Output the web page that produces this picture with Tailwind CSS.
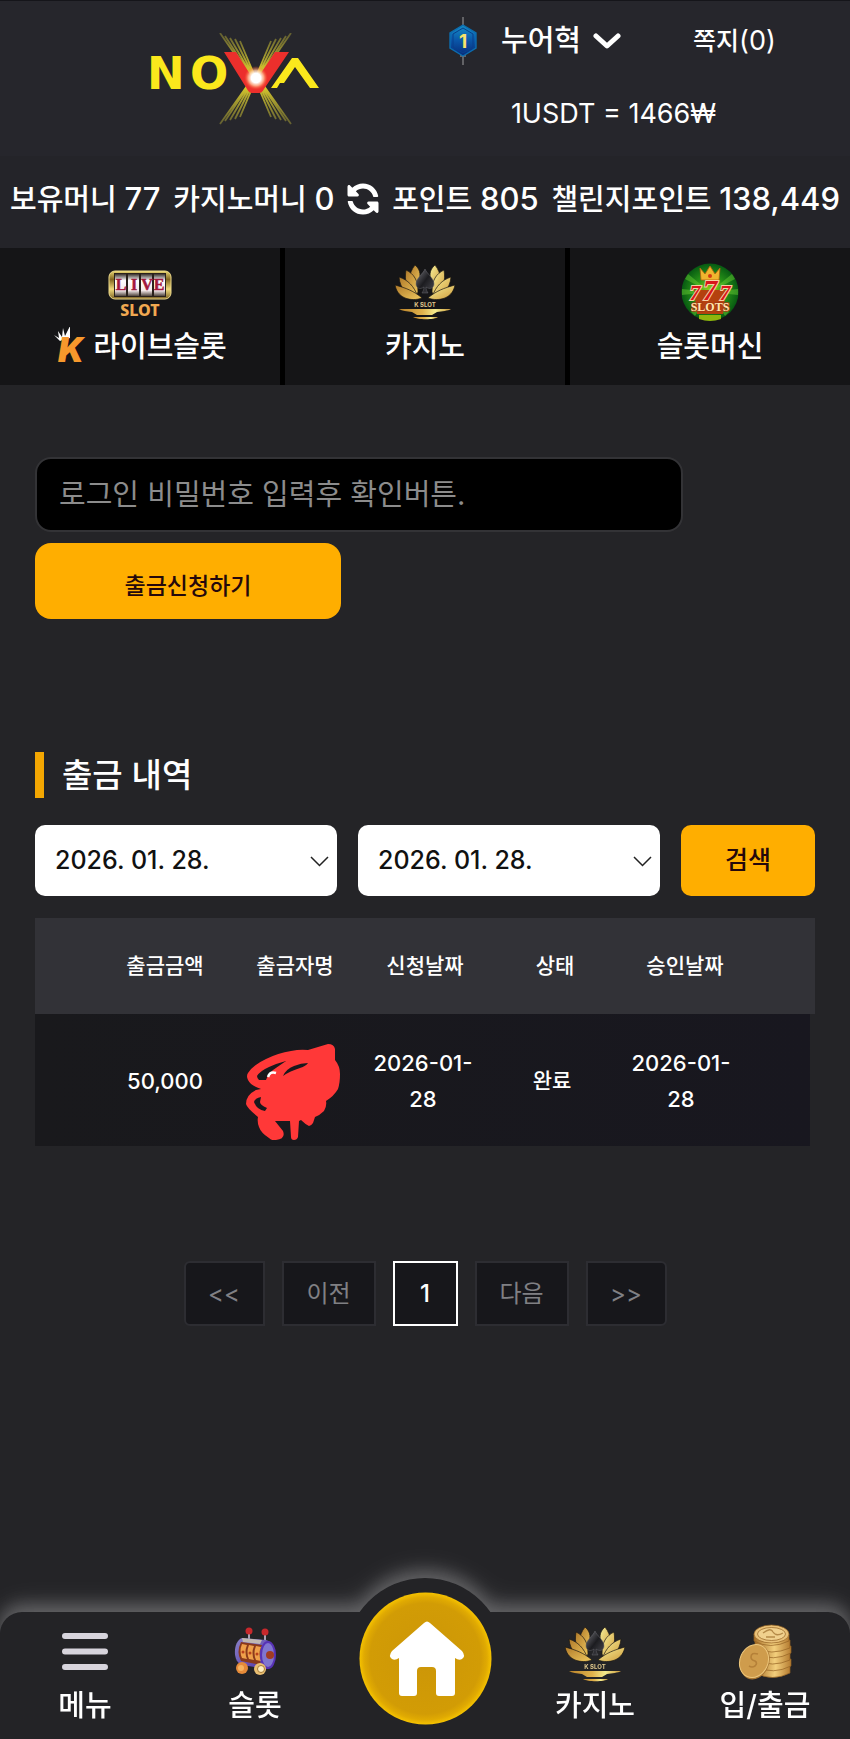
<!DOCTYPE html>
<html lang="ko">
<head>
<meta charset="utf-8">
<meta name="viewport" content="width=device-width, initial-scale=1">
<title>NOVA - 출금신청</title>
<script src="https://cdn.jsdelivr.net/npm/@tailwindcss/browser@4"></script>
</head>
<body class="flex min-h-screen flex-col bg-[#242427] font-['Inter','Noto_Sans_CJK_KR',sans-serif] text-[29px] leading-10 font-medium text-white">

<svg class="absolute size-0" aria-hidden="true">
  <defs>
    <linearGradient id="gold" x1="0" y1="0" x2="1" y2="0">
      <stop offset="0" stop-color="#b9822a"/><stop offset=".45" stop-color="#e0b24c"/><stop offset=".7" stop-color="#f3ea8c"/><stop offset="1" stop-color="#c9973a"/>
    </linearGradient>
    <linearGradient id="petalL" x1="0" y1="0" x2="1" y2="1"><stop offset="0" stop-color="#b07a2a"/><stop offset="1" stop-color="#f0c95e"/></linearGradient>
    <linearGradient id="petalR" x1="1" y1="1" x2="0" y2="0"><stop offset="0" stop-color="#d09b3a"/><stop offset="1" stop-color="#f6f09a"/></linearGradient>
    <linearGradient id="spade" x1="0" y1="0" x2="1" y2="1"><stop offset="0" stop-color="#77777d"/><stop offset=".5" stop-color="#1c1c20"/><stop offset="1" stop-color="#4a4a50"/></linearGradient>
    <symbol id="lotus" viewBox="0 0 60 56">
      <g fill="url(#petalL)" stroke="#1a1712" stroke-width=".7">
        <path d="M20 1c6 5 6 11 3 20l-3 6c-7-8-7-17 0-26z"/>
        <path d="M11 6c8 4 12 10 12 22l-2 4C12 26 9 17 11 6z"/>
        <path d="M4 13c9 3 15 9 19 20C13 33 5 25 4 13z"/>
        <path d="M0 21c11 3 19 6 27 13-7 3-24 3-27-13z"/>
      </g>
      <g fill="url(#petalR)" stroke="#1a1712" stroke-width=".7">
        <path d="M40 1c-6 5-6 11-3 20l3 6c7-8 7-17 0-26z"/>
        <path d="M49 6c-8 4-12 10-12 22l2 4c9-6 12-15 10-26z"/>
        <path d="M56 13c-9 3-15 9-19 20 10 0 18-8 19-20z"/>
        <path d="M60 21c-11 3-19 6-27 13 7 3 24 3 27-13z"/>
      </g>
      <path d="M30 5c2 5 9 9 9 15 0 4-4 6-8 3 0 3 1 4 2 6h-6c1-2 2-3 2-6-4 3-8 1-8-3 0-6 7-10 9-15z" fill="url(#spade)" stroke="#66666c" stroke-width=".5"/>
      <text x="30" y="43" text-anchor="middle" font-family="Inter" font-size="6" font-weight="700" fill="#e0c88c">K SLOT</text>
      <path d="M4 45h52c-3 2-9 2-14 3l-5 3H22l-5-3c-5-1-10-1-13-3z" fill="url(#gold)"/>
      <path d="M18 53h25c-3 3-21 3-25 0z" fill="url(#gold)"/>
    </symbol>
  </defs>
</svg>

<header class="border-t border-[#15151a] bg-[#26262c]">
  <div class="grid grid-cols-2">
    <a href="#" aria-label="NOVA" class="flex h-[155px] items-center justify-center pl-10">
      <svg class="h-[92px] w-[174px]" viewBox="-4 0 174 92" role="img" aria-hidden="true">
        <defs>
          <radialGradient id="flare"><stop offset="0" stop-color="#fff"/><stop offset=".4" stop-color="#fff"/><stop offset=".65" stop-color="#ffc49a" stop-opacity=".8"/><stop offset="1" stop-color="#ff4a20" stop-opacity="0"/></radialGradient>
          <linearGradient id="ray" gradientUnits="userSpaceOnUse" x1="0" y1="0" x2="0" y2="92"><stop offset="0" stop-color="#8a8435" stop-opacity=".6"/><stop offset=".5" stop-color="#f8e72a"/><stop offset="1" stop-color="#8a8435" stop-opacity=".6"/></linearGradient>
        </defs>
        <g stroke="url(#ray)" stroke-width="1.8" fill="none">
          <path d="M70 0l32 46M75 3l28 43M80 5l24 41M85 6l20 40M90 8l16 38M141 0l-32 46M136 3l-28 43M131 5l-24 41M126 6l-20 40M121 8l-16 38"/>
          <path d="M70 91l32-45M75 88l28-42M80 87l24-41M85 86l20-40M90 84l16-38M141 91l-32-45M136 88l-28-42M131 87l-24-41M126 86l-20-40M121 84l-16-38"/>
        </g>
        <g font-family="DejaVu Sans" font-size="45" font-weight="700" fill="#fbe81c">
          <text x="-3" y="56">N</text>
          <text x="40" y="56">O</text>
        </g>
        <path d="M121 55l21-30h6l21 30h-9L145 34l-11 16h-4l-3 5z" fill="#fbe81c"/>
        <path d="M74 19h12l19 30 20-30h14l-25 37q-2 4-5 4h-7q-3 0-5-4z" fill="#ec2f2c"/>
        <circle cx="106" cy="45" r="12" fill="url(#flare)"/>
      </svg>
    </a>
    <div class="pt-5">
      <div class="flex h-10 items-center pl-6">
        <svg class="h-12 w-7" viewBox="0 0 28 48" aria-label="레벨 1" role="img">
          <defs><linearGradient id="hex" x1="0" y1="0" x2="0" y2="1"><stop offset="0" stop-color="#1590c8"/><stop offset=".5" stop-color="#0a56a8"/><stop offset="1" stop-color="#072a78"/></linearGradient></defs>
          <path d="M14 0v8M11 39h6M14 39v9" stroke="#77777a" stroke-width="1.5"/>
          <path d="M14 8l13 8v15l-13 8-13-8V16z" fill="url(#hex)" stroke="#0c6cae" stroke-width="1.4"/>
          <path d="M14 11l10 6v13l-10 6-10-6V17z" fill="none" stroke="#093f8c" stroke-width="1"/>
          <text x="14" y="31" text-anchor="middle" font-family="Inter" font-size="19" font-weight="700" fill="#f7e36a">1</text>
        </svg>
        <button type="button" class="ml-6 flex items-center gap-3">누어혁
          <svg class="h-4 w-7" viewBox="0 0 28 16" fill="none" stroke="#fff" stroke-width="5" stroke-linecap="round" stroke-linejoin="round" aria-hidden="true"><path d="M3 3l11 10L25 3"/></svg>
        </button>
        <a href="#" class="ml-[72px] text-[25px]">쪽지<span class="text-[27px] font-normal">(0)</span></a>
      </div>
      <p class="mt-[33px] pr-12 text-center text-[27px] leading-10 font-normal">1USDT = 1466₩</p>
    </div>
  </div>
  <div class="flex h-[92px] items-center justify-between bg-[#242429] px-2.5 pb-1.5 whitespace-nowrap">
    <span>보유머니 <span class="text-[31px]">77</span></span>
    <span>카지노머니 <span class="text-[31px]">0</span></span>
    <button type="button" aria-label="새로고침">
      <svg class="size-8" viewBox="0 0 512 512" fill="#fff" aria-hidden="true"><path d="M370.700 133.300C339.500 104 298.900 88 255.800 88c-77.500.1-144.300 53.200-162.800 126.900-1.300 5.400-6.100 9.100-11.700 9.100H24.100c-7.500 0-13.200-6.800-11.800-14.200C33.900 94.900 134.800 8 256 8c66.400 0 126.800 26.100 171.300 68.700L463 41c15.100-15.100 41-4.400 41 17v134c0 13.300-10.700 24-24 24H346c-21.400 0-32.100-25.900-17-41zM32 296h134c21.400 0 32.100 25.900 17 41l-41.800 41.800c31.300 29.300 71.800 45.300 114.900 45.300 77.400-.1 144.300-53.100 162.800-126.800 1.300-5.400 6.100-9.100 11.700-9.100h57.300c7.500 0 13.200 6.800 11.800 14.200C478.100 417.100 377.200 504 256 504c-66.400 0-126.800-26.100-171.300-68.700L49 471c-15.100 15.100-41 4.400-41-17V320c0-13.300 10.700-24 24-24z" transform="matrix(-1 0 0 1 512 0)"/></svg>
    </button>
    <span>포인트 <span class="text-[31px]">805</span></span>
    <span>챌린지포인트 <span class="text-[31px]">138,449</span></span>
  </div>
</header>

<nav class="grid h-[137px] grid-cols-3 gap-[5px] bg-black" aria-label="게임">
  <a href="#" class="flex flex-col items-center gap-[5px] bg-[#151517] pt-3.5">
    <svg class="h-[60px] w-16" viewBox="0 0 64 60" aria-hidden="true">
      <defs><linearGradient id="frame" x1="0" y1="0" x2="0" y2="1"><stop offset="0" stop-color="#ead774"/><stop offset=".3" stop-color="#80651f"/><stop offset=".65" stop-color="#f0d979"/><stop offset="1" stop-color="#7e6427"/></linearGradient>
      <linearGradient id="reel" x1="0" y1="0" x2="0" y2="1"><stop offset="0" stop-color="#3b332e"/><stop offset=".3" stop-color="#fff"/><stop offset=".75" stop-color="#f4e9ea"/><stop offset="1" stop-color="#51463e"/></linearGradient></defs>
      <rect x="1" y="9" width="62" height="28" rx="6" fill="url(#frame)" stroke="#ecd98b"/>
      <rect x="6" y="11" width="52" height="24" fill="#2a211c"/>
      <g fill="url(#reel)"><rect x="7" y="12" width="11" height="22"/><rect x="20" y="12" width="11" height="22"/><rect x="33" y="12" width="11" height="22"/><rect x="46" y="12" width="11" height="22"/></g>
      <g font-family="Liberation Serif" font-size="16" font-weight="700" fill="#a3183c" stroke="#a3183c" stroke-width=".5" text-anchor="middle"><text x="13" y="28">L</text><text x="26" y="28">I</text><text x="39" y="28">V</text><text x="51" y="28">E</text></g>
      <text x="32" y="54" text-anchor="middle" font-family="Noto Sans" font-size="16" font-weight="800" fill="#f0a851">SLOT</text>
    </svg>
    <span class="flex items-center">
      <svg class="h-10 w-10" viewBox="0 0 40 40" aria-hidden="true">
        <path d="M7 14L1 8l5 3-1-7 4 6 1-9 2 8 5-10 0 12-5 1z" fill="#fff"/>
        <text x="5" y="35" font-family="Inter" font-size="34" font-weight="900" font-style="italic" fill="#f7982c">K</text>
      </svg>라이브슬롯</span>
  </a>
  <a href="#" class="flex flex-col items-center gap-[5px] bg-[#151517] pt-3.5">
    <svg class="h-[60px] w-[60px]" aria-hidden="true"><use href="#lotus"/></svg>카지노
  </a>
  <a href="#" class="flex flex-col items-center gap-[5px] bg-[#151517] pt-3.5">
    <svg class="h-[60px] w-[58px]" viewBox="0 0 58 60" aria-hidden="true">
      <defs><radialGradient id="green"><stop offset="0" stop-color="#a4d51a"/><stop offset=".55" stop-color="#279317"/><stop offset="1" stop-color="#075a12"/></radialGradient></defs>
      <circle cx="29" cy="30" r="28.500" fill="url(#green)"/>
      <path d="M29 30L4 17l3-5zM29 30L1 33v-6zM29 30L54 17l-3-5zM29 30l28 3v-6zM29 30L10 50l4 4zM29 30l19 20-4 4z" fill="#6ed236" opacity=".45"/>
      <path d="M20 18l-1-12 5 6 5-8 5 8 5-6-1 12z" fill="#f0b52e" stroke="#b85e12" stroke-width=".8"/>
      <circle cx="29" cy="14" r="2" fill="#d53813"/>
      <path d="M13 28h32l-3 24H16z" fill="#b4410f"/>
      <path d="M18 53h22v4q-11 4-22 0z" fill="#8fb50d"/>
      <g font-family="Liberation Serif" font-weight="700" font-style="italic" fill="#d8171b" stroke="#f8cfa4" stroke-width="2" paint-order="stroke" text-anchor="middle">
        <text x="14" y="38" font-size="22">7</text><text x="44" y="38" font-size="22">7</text><text x="29" y="38" font-size="29">7</text>
      </g>
      <text x="29" y="49" text-anchor="middle" font-family="Liberation Serif" font-size="12" font-weight="700" fill="#ffe5ae" stroke="#a63713" stroke-width="1.500" paint-order="stroke">SLOTS</text>
    </svg>슬롯머신
  </a>
</nav>

<main class="flex-1 px-[35px] pt-[72px]">
  <form class="flex flex-col items-start gap-[11px]">
    <input type="password" aria-label="로그인 비밀번호" placeholder="로그인 비밀번호 입력후 확인버튼." class="h-[75px] w-5/6 max-w-[648px] rounded-2xl border-2 border-[#333336] bg-black px-[22px] font-normal placeholder:text-[#8c8c8c]">
    <button type="button" class="h-[76px] w-[306px] rounded-2xl bg-[#ffae00] pt-2.5 text-[23px] text-[#24080c]">출금신청하기</button>
  </form>

  <h2 class="mt-[133px] flex h-[46px] items-center border-l-[9px] border-[#ffae00]/95 pl-[18px] text-[33px]">출금 내역</h2>

  <form class="mt-[27px] flex gap-[21px]">
    <div class="relative flex-1">
      <select aria-label="시작일" class="h-[71px] w-full appearance-none rounded-[10px] bg-white pb-0.5 pl-5 text-[25px] text-[#111]"><option>2026. 01. 28.</option></select>
      <svg class="pointer-events-none absolute top-[31px] right-2 h-[11px] w-[19px]" viewBox="0 0 19 11" fill="none" stroke="#222" stroke-width="1.500" aria-hidden="true"><path d="M1 1l8.500 8.500L18 1"/></svg>
    </div>
    <div class="relative flex-1">
      <select aria-label="종료일" class="h-[71px] w-full appearance-none rounded-[10px] bg-white pb-0.5 pl-5 text-[25px] text-[#111]"><option>2026. 01. 28.</option></select>
      <svg class="pointer-events-none absolute top-[31px] right-2 h-[11px] w-[19px]" viewBox="0 0 19 11" fill="none" stroke="#222" stroke-width="1.500" aria-hidden="true"><path d="M1 1l8.500 8.500L18 1"/></svg>
    </div>
    <button type="button" class="h-[71px] w-[134px] rounded-[10px] bg-[#ffae00] pb-0.5 text-[25px] text-[#24080c]">검색</button>
  </form>

  <table class="mt-[22px] w-full table-fixed border-separate border-spacing-0 text-center text-[21px] leading-9">
    <colgroup><col class="w-1/12"><col class="w-1/6"><col class="w-1/6"><col class="w-1/6"><col class="w-1/6"><col class="w-1/6"><col class="w-1/12"></colgroup>
    <thead>
      <tr class="h-24 bg-[#323237]">
        <td></td><th class="font-medium">출금금액</th><th class="font-medium">출금자명</th><th class="font-medium">신청날짜</th><th class="font-medium">상태</th><th class="font-medium">승인날짜</th><td></td>
      </tr>
    </thead>
    <tbody>
      <tr class="h-[132px] bg-linear-to-r from-[#19191c] to-[#18171f]">
        <td></td>
        <td class="pt-0.5 text-[22px]">50,000</td>
        <td class="pr-1 pb-1.5 align-bottom">
          <svg class="mx-auto block h-24 w-[94px]" viewBox="0 0 94 96" role="img" aria-label="가려진 이름">
            <path fill="#ff3838" fill-rule="evenodd" d="M82 0q6 0 7 5l0 11q5 6 5 14 0 9-2 15-4 7-12 12 1 5-2 10-4 4-9 6l-2 6q-2 3-4 3-4-2-8-6l-2 1-1 16q-1 3-4 3-3 0-3-3l-1-16H30l-1 0 8 10q3 8-7 9-4 1-7-2-8-5-10-11-2-5-1-10Q1 64 0 60q0-9 10-14l5-1Q5 42 2 36q-2-4 0-7 5-8 18-14 12-6 25-8 9-2 17-1zM11 32q0 2 2 4h7q2-6 7-10l13-9q-8 2-17 6-9 4-12 9zM37 32q3-7 11-10 7-3 14-3-2 3-8 5-10 3-17 8zM8 58q3 8 11 9l2-3q-7-3-7-6l1-5q-6 1-7 5z"/>
            <path d="M22 33q2-6 8-4" fill="none" stroke="#fff" stroke-width="2.500"/>
          </svg>
        </td>
        <td class="pt-0.5 pr-1 text-[22px]">2026-01-<br>28</td>
        <td class="pt-0.5 pr-1.5">완료</td>
        <td class="pt-0.5 pr-2 text-[22px]">2026-01-<br>28</td>
        <td class="border-r-[5px] border-[#242427]"></td>
      </tr>
    </tbody>
  </table>

  <nav class="mt-[115px] flex justify-center gap-[17px] text-[24px] font-normal text-[#808084]" aria-label="페이지">
    <button type="button" class="h-[65px] w-[81px] rounded-l-md border-2 border-[#2d2d32] bg-[#17171b]">&lt;&lt;</button>
    <button type="button" class="h-[65px] w-[94px] border-2 border-[#2d2d32] bg-[#17171b]">이전</button>
    <button type="button" aria-current="page" class="h-[65px] w-[65px] border-2 border-white bg-[#17171b] font-medium text-white">1</button>
    <button type="button" class="h-[65px] w-[94px] border-2 border-[#2d2d32] bg-[#17171b]">다음</button>
    <button type="button" class="h-[65px] w-[81px] rounded-r-md border-2 border-[#2d2d32] bg-[#17171b]">&gt;&gt;</button>
  </nav>
</main>

<footer class="relative overflow-x-clip">
 <div class="filter-[drop-shadow(0_-8px_8px_rgba(255,255,255,0.2))_drop-shadow(0_-4px_14px_rgba(255,255,255,0.14))]">
  <div class="absolute -top-[34px] left-1/2 size-40 -translate-x-1/2 rounded-full bg-[#232326]"></div>
  <nav class="relative grid h-[127px] grid-cols-5 rounded-t-[22px] bg-[#232326]" aria-label="하단 메뉴">
    <a href="#" class="flex flex-col items-center gap-0.5 pt-3">
      <svg class="h-[60px] w-[46px]" viewBox="0 0 46 60" stroke="#d7d4dc" stroke-width="6" stroke-linecap="round" aria-hidden="true"><path d="M3 12h40M3 27.500h40M3 43h40"/></svg>메뉴
    </a>
    <a href="#" class="flex flex-col items-center gap-0.5 pt-3">
      <svg class="h-[60px] w-[42px]" viewBox="0 0 42 60" aria-hidden="true">
        <defs><linearGradient id="drum" x1="0" y1="0" x2="1" y2="1"><stop offset="0" stop-color="#8b82c6"/><stop offset="1" stop-color="#4a2fa8"/></linearGradient></defs>
        <path d="M15 7v11M31 8v11" stroke="#a9a3b5" stroke-width="2"/>
        <circle cx="15" cy="7" r="3.500" fill="#c7282c"/><circle cx="31" cy="8" r="3.500" fill="#c7282c"/>
        <path d="M8 14l24 2c12 3 11 26 1 29L8 41C-2 38-1 17 8 14z" fill="url(#drum)"/>
        <path d="M8 14l20 2-2 4-17-2z" fill="#c0b9b2"/>
        <path d="M7 18l21 3q-4 10-1 20L7 37q-5-9 0-19z" fill="#8a3a1c"/>
        <g fill="#efa04a"><path d="M8 20l5 1q-3 7 0 14l-5-1q-3-7 0-14z"/><path d="M15 21l5 1q-3 7 0 14l-5-1q-3-7 0-14z"/><path d="M22 22l5 1q-3 7 0 14l-5-1q-3-7 0-14z"/></g>
        <g fill="#b9401c"><circle cx="9" cy="28" r="1.500"/><circle cx="16" cy="29" r="1.500"/><circle cx="23" cy="30" r="1.500"/></g>
        <ellipse cx="34" cy="31" rx="7" ry="13" fill="#8076cf" stroke="#5732b5" stroke-width="2"/>
        <circle cx="36" cy="31" r="4" fill="#a03b22"/>
        <circle cx="8" cy="44" r="6" fill="#e58a39"/><circle cx="7" cy="44" r="3" fill="#f6b35f"/>
        <circle cx="26" cy="45" r="6" fill="#eabf72"/><circle cx="27" cy="45" r="3.500" fill="#fff0c4" stroke="#a77a32"/>
      </svg>슬롯
    </a>
    <a href="#" aria-label="홈" class="relative flex justify-center">
      <svg class="absolute -top-5 h-[133px] w-[133px]" viewBox="0 0 133 133" aria-hidden="true">
        <defs><radialGradient id="coin"><stop offset="0" stop-color="#cc9608"/><stop offset=".84" stop-color="#d29c05"/><stop offset=".93" stop-color="#e0aa02"/><stop offset="1" stop-color="#f5c200"/></radialGradient></defs>
        <circle cx="66.500" cy="66.500" r="66" fill="url(#coin)"/>
        <path d="M65 31q3-3 6 0l32 28q4 5 0 8-3 2-7-1v35q0 3-3 3H80q-3 0-3-3V79q0-4-4-4H62q-4 0-4 4v22q0 3-3 3H43q-3 0-3-3V66q-4 3-7 1-4-3 0-8z" fill="#fff"/>
      </svg>
    </a>
    <a href="#" class="flex flex-col items-center gap-0.5 pt-3">
      <svg class="h-[60px] w-[60px]" aria-hidden="true"><use href="#lotus"/></svg>카지노
    </a>
    <a href="#" class="flex flex-col items-center gap-0.5 pt-3">
      <svg class="h-[60px] w-[54px]" viewBox="0 0 54 60" aria-hidden="true">
        <defs><linearGradient id="stack" x1="0" y1="0" x2="1" y2="0"><stop offset="0" stop-color="#a66d27"/><stop offset=".55" stop-color="#f3cf7c"/><stop offset="1" stop-color="#b67d32"/></linearGradient></defs>
        <g fill="url(#stack)" stroke="#946222" stroke-width=".7">
          <path d="M18 42v7q16 9 34 0v-8z"/><path d="M19 36v7q16 8 34-1v-7z"/><path d="M18 29v7q16 8 34 0v-8z"/><path d="M19 23v7q16 8 34-1v-7z"/><path d="M17 16v8q16 8 35 0v-8z"/><path d="M16 10v7q16 9 35 0v-7z"/>
          <ellipse cx="33.500" cy="10" rx="17.500" ry="9" fill="#e9c178"/><ellipse cx="33.500" cy="10" rx="14" ry="6.500" fill="#f0d08d"/>
        </g>
        <path d="M25 9q8-6 10-1 3 5 10 1M28 13h9" fill="none" stroke="#b58a48" stroke-width="1.300"/>
        <ellipse cx="17" cy="38" rx="14" ry="18" transform="rotate(24 17 38)" fill="#a87632"/>
        <ellipse cx="16" cy="37" rx="14" ry="17" transform="rotate(24 16 37)" fill="#cf9c4c" stroke="#edc77c"/>
        <path d="M20 30q-7-2-7 3 0 3 4 4 3 2 0 5-3 2-6 0" fill="none" stroke="#b58038" stroke-width="1.600"/>
      </svg>입/출금
    </a>
  </nav>
 </div>
</footer>
</body>
</html>
